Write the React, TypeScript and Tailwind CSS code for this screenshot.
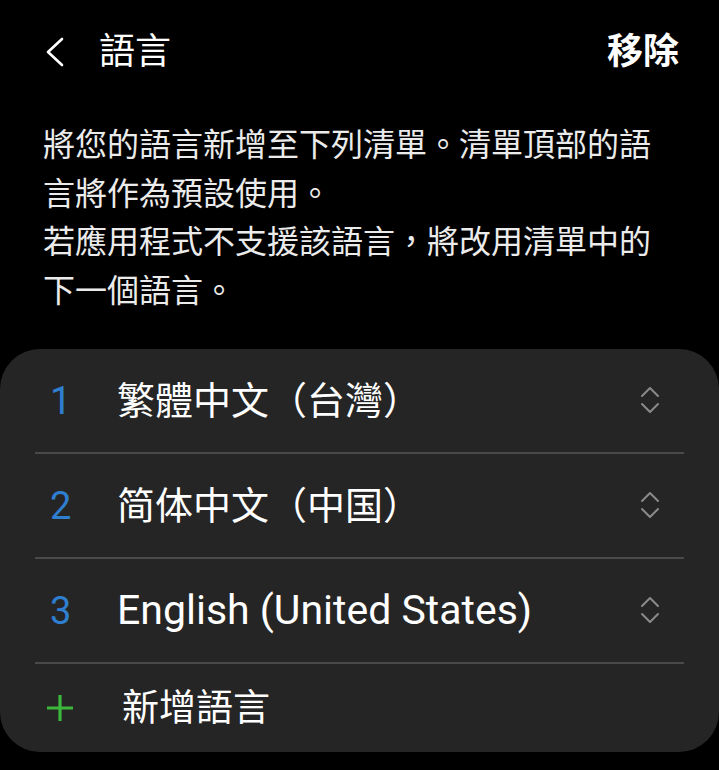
import React from "react";

const FONT = {
  fontFamily: 'Roboto, "Noto Sans CJK TC", sans-serif',
};

type Lang = { n: number; name: string; latin?: boolean };

const LANGS: Lang[] = [
  { n: 1, name: "繁體中文（台灣）" },
  { n: 2, name: "简体中文（中国）" },
  { n: 3, name: "English (United States)", latin: true },
];

function BackIcon() {
  return (
    <svg width="20" height="30" viewBox="0 0 20 30" fill="none">
      <path d="M17 2 L3 15 L17 28" stroke="#ffffff" strokeWidth="2.6" strokeLinecap="round" strokeLinejoin="round" />
    </svg>
  );
}

function ReorderIcon() {
  return (
    <svg width="22" height="30" viewBox="0 0 22 30" fill="none">
      <path d="M3 10 L11 2 L19 10" stroke="#8a8a8a" strokeWidth="2" strokeLinecap="round" strokeLinejoin="round" />
      <path d="M3 18 L11 26 L19 18" stroke="#8a8a8a" strokeWidth="2" strokeLinecap="round" strokeLinejoin="round" />
    </svg>
  );
}

function PlusIcon() {
  return (
    <svg width="30" height="30" viewBox="0 0 30 30" fill="none">
      <path d="M15 2 V28 M2 15 H28" stroke="#3cb83c" strokeWidth="3.2" />
    </svg>
  );
}

function Row({ lang }: { lang: Lang }) {
  return (
    <div className="flex h-[103px] items-center pl-[50px] pr-[58px]">
      <span className="w-[67px] text-[38px] leading-none text-[#2f7fd0]">{lang.n}</span>
      <span
        className={
          lang.latin
            ? "flex-1 text-[41px] leading-none text-white"
            : "flex-1 text-[38px] leading-none text-white"
        }
      >
        {lang.name}
      </span>
      <ReorderIcon />
    </div>
  );
}

export default function App() {
  return (
    <div className="flex min-h-[770px] w-[719px] flex-col bg-black text-white" style={FONT}>
      <div className="flex h-[104px] items-center pl-[45px] pr-[40px]">
        <BackIcon />
        <span className="ml-[34px] flex-1 text-[36px] leading-none">語言</span>
        <span className="text-[36px] font-bold leading-none">移除</span>
      </div>

      <div className="mt-[17px] px-[43px] text-[32px] leading-[48.5px] text-[#ebebeb]">
        <p>將您的語言新增至下列清單。清單頂部的語</p>
        <p>言將作為預設使用。</p>
        <p>若應用程式不支援該語言，將改用清單中的</p>
        <p>下一個語言。</p>
      </div>

      <div className="mt-[34px] rounded-[40px] bg-[#252525]">
        {LANGS.map((l) => (
          <React.Fragment key={l.n}>
            <Row lang={l} />
            <div className="mx-[35px] h-[2px] bg-[#4a4a4a]" />
          </React.Fragment>
        ))}
        <div className="flex h-[88px] items-center pl-[45px]">
          <PlusIcon />
          <span className="ml-[47px] text-[37px] leading-none text-white">新增語言</span>
        </div>
      </div>
    </div>
  );
}
